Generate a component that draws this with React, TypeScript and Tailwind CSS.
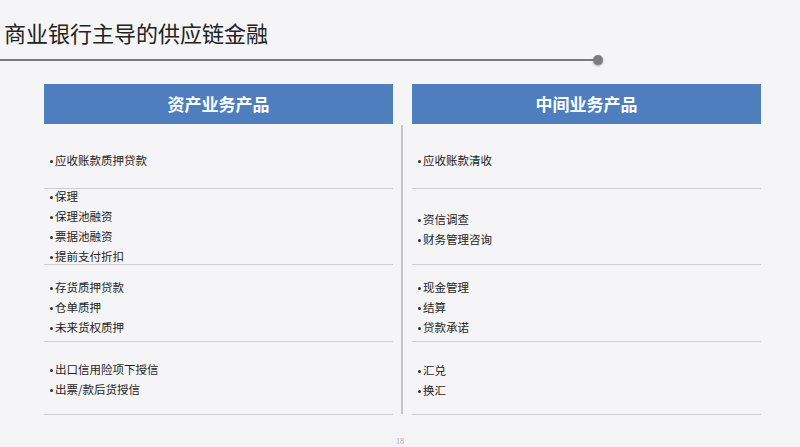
const FONT = { fontFamily: '"Noto Sans CJK SC", "Noto Sans", sans-serif' };

interface Group {
  /** section height in px, including the bottom rule */
  h: string;
  pt: string;
  items: string[];
}

const left: Group[] = [
  { h: "h-[65px]", pt: "pt-[27px]", items: ["应收账款质押贷款"] },
  { h: "h-[76px]", pt: "-translate-y-[2px]", items: ["保理", "保理池融资", "票据池融资", "提前支付折扣"] },
  { h: "h-[77px]", pt: "pt-[13px]", items: ["存货质押贷款", "仓单质押", "未来货权质押"] },
  { h: "h-[73px]", pt: "pt-[18px]", items: ["出口信用险项下授信", "出票/款后货授信"] },
];

const right: Group[] = [
  { h: "h-[65px]", pt: "pt-[27px]", items: ["应收账款清收"] },
  { h: "h-[76px]", pt: "pt-[21px]", items: ["资信调查", "财务管理咨询"] },
  { h: "h-[77px]", pt: "pt-[13px]", items: ["现金管理", "结算", "贷款承诺"] },
  { h: "h-[73px]", pt: "pt-[19px]", items: ["汇兑", "换汇"] },
];

function Column({ title, groups }: { title: string; groups: Group[] }) {
  return (
    <div className="flex w-[349px] flex-col">
      <div className="flex h-[40px] items-center justify-center bg-[#4f7ebe] text-[17px] font-bold text-white">
        {title}
      </div>
      {groups.map((g, i) => (
        <div key={i} className={`${g.h} border-b border-[#cdcdd2]`}>
          <div className={g.pt}>
            {g.items.map((t) => (
              <div key={t} className="flex h-[20px] items-center pl-[6px] text-[11.5px] text-[#1e1e1e]">
                <span className="mr-[2px] h-[3px] w-[3px] shrink-0 rounded-full bg-[#333]" />
                {t}
              </div>
            ))}
          </div>
        </div>
      ))}
    </div>
  );
}

export default function App() {
  return (
    <div className="relative flex h-[447px] w-[800px] flex-col overflow-hidden bg-[#f5f5f7]" style={FONT}>
      <h1 className="pl-[4px] pt-[18px] text-[22px] font-normal leading-[28px] text-[#222]">
        商业银行主导的供应链金融
      </h1>
      <div className="mt-[9px] flex items-center">
        <div className="h-[2px] w-[593px] bg-[#7a7a7a]" />
        <div className="h-[10px] w-[10px] rounded-full bg-[#7c7c7c] shadow-[0_1px_2px_rgba(0,0,0,0.35)]" />
      </div>
      <div className="mt-[19px] flex pl-[44px]">
        <Column title="资产业务产品" groups={left} />
        <div className="w-[19px] pl-[8px]">
          <div className="mt-[41px] h-[289px] w-[1.5px] bg-[#c4c4c8]" />
        </div>
        <Column title="中间业务产品" groups={right} />
      </div>
      <div className="mt-[21px] pl-[396px] text-[8px] text-[#a8a8a8]" style={{ fontFamily: '"Liberation Serif", serif' }}>
        18
      </div>
    </div>
  );
}
